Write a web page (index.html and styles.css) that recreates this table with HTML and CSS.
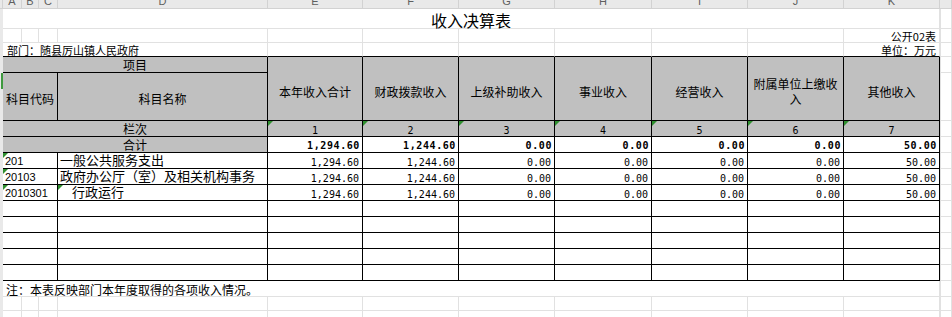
FILE: index.html
```html
<!DOCTYPE html>
<html lang="zh-CN">
<head>
<meta charset="utf-8">
<title>收入决算表</title>
<link rel="stylesheet" href="styles.css">
</head>
<body>
<div class="sheet">
  <!-- column letters -->
  <div class="corner"></div>
  <div class="ch">A</div><div class="ch">B</div><div class="ch">C</div><div class="ch">D</div>
  <div class="ch">E</div><div class="ch">F</div><div class="ch">G</div><div class="ch">H</div>
  <div class="ch">I</div><div class="ch">J</div><div class="ch">K</div><div class="ch chl"></div>

  <div class="sliver"><div class="sel"></div></div>

  <!-- row 1: title -->
  <div class="c s11 title">收入决算表</div><div class="c l"></div>

  <!-- row 2 -->
  <div class="c"></div><div class="c"></div><div class="c"></div><div class="c"></div>
  <div class="c"></div><div class="c"></div><div class="c"></div><div class="c"></div>
  <div class="c"></div><div class="c"></div><div class="c rt">公开02表</div><div class="c l"></div>

  <!-- row 3 -->
  <div class="c s4 top dept">部门：随县厉山镇人民政府</div>
  <div class="c top"></div><div class="c top"></div><div class="c top"></div>
  <div class="c top"></div><div class="c top"></div><div class="c top"></div>
  <div class="c top rt">单位：万元</div><div class="c l"></div>

  <!-- header rows -->
  <div class="t g s4 lab">项目</div>
  <div class="t g r2 hd">本年收入合计</div>
  <div class="t g r2 hd">财政拨款收入</div>
  <div class="t g r2 hd">上级补助收入</div>
  <div class="t g r2 hd">事业收入</div>
  <div class="t g r2 hd">经营收入</div>
  <div class="t g r2 hd">附属单位上缴收入</div>
  <div class="t g r2 hd">其他收入</div>
  <div class="c l"></div>

  <div class="t g s3 hd2">科目代码</div>
  <div class="t g hd2">科目名称</div>
  <div class="c l"></div>

  <!-- 栏次 -->
  <div class="t g s4 lab">栏次</div>
  <div class="t g idx tri">1</div><div class="t g idx tri">2</div><div class="t g idx tri">3</div>
  <div class="t g idx tri">4</div><div class="t g idx tri">5</div><div class="t g idx tri">6</div>
  <div class="t g idx tri">7</div>
  <div class="c l"></div>

  <!-- 合计 -->
  <div class="t g s4 lab">合计</div>
  <div class="t num b">1,294.60</div><div class="t num b">1,244.60</div><div class="t num b">0.00</div>
  <div class="t num b">0.00</div><div class="t num b">0.00</div><div class="t num b">0.00</div>
  <div class="t num b">50.00</div>
  <div class="c l"></div>

  <!-- data rows -->
  <div class="t s3 code tri">201</div><div class="t name">一般公共服务支出</div>
  <div class="t num">1,294.60</div><div class="t num">1,244.60</div><div class="t num">0.00</div>
  <div class="t num">0.00</div><div class="t num">0.00</div><div class="t num">0.00</div>
  <div class="t num">50.00</div>
  <div class="c l"></div>

  <div class="t s3 code tri">20103</div><div class="t name">政府办公厅（室）及相关机构事务</div>
  <div class="t num">1,294.60</div><div class="t num">1,244.60</div><div class="t num">0.00</div>
  <div class="t num">0.00</div><div class="t num">0.00</div><div class="t num">0.00</div>
  <div class="t num">50.00</div>
  <div class="c l"></div>

  <div class="t s3 code tri">2010301</div><div class="t name ind tri">行政运行</div>
  <div class="t num">1,294.60</div><div class="t num">1,244.60</div><div class="t num">0.00</div>
  <div class="t num">0.00</div><div class="t num">0.00</div><div class="t num">0.00</div>
  <div class="t num">50.00</div>
  <div class="c l"></div>

  <!-- empty rows -->
  <div class="t s3"></div><div class="t"></div>
  <div class="t"></div><div class="t"></div><div class="t"></div><div class="t"></div>
  <div class="t"></div><div class="t"></div><div class="t"></div>
  <div class="c l"></div>

  <div class="t s3"></div><div class="t"></div>
  <div class="t"></div><div class="t"></div><div class="t"></div><div class="t"></div>
  <div class="t"></div><div class="t"></div><div class="t"></div>
  <div class="c l"></div>

  <div class="t s3"></div><div class="t"></div>
  <div class="t"></div><div class="t"></div><div class="t"></div><div class="t"></div>
  <div class="t"></div><div class="t"></div><div class="t"></div>
  <div class="c l"></div>

  <div class="t s3"></div><div class="t"></div>
  <div class="t"></div><div class="t"></div><div class="t"></div><div class="t"></div>
  <div class="t"></div><div class="t"></div><div class="t"></div>
  <div class="c l"></div>

  <div class="t s3"></div><div class="t"></div>
  <div class="t"></div><div class="t"></div><div class="t"></div><div class="t"></div>
  <div class="t"></div><div class="t"></div><div class="t"></div>
  <div class="c l"></div>

  <!-- note -->
  <div class="c s11 note">注：本表反映部门本年度取得的各项收入情况。</div><div class="c l"></div>

  <!-- trailing rows -->
  <div class="c"></div><div class="c"></div><div class="c"></div><div class="c"></div>
  <div class="c"></div><div class="c"></div><div class="c"></div><div class="c"></div>
  <div class="c"></div><div class="c"></div><div class="c"></div><div class="c l"></div>

  <div class="c"></div><div class="c"></div><div class="c"></div><div class="c"></div>
  <div class="c"></div><div class="c"></div><div class="c"></div><div class="c"></div>
  <div class="c"></div><div class="c"></div><div class="c"></div><div class="c l"></div>
</div>
</body>
</html>
```

FILE: styles.css
```css
* {
  box-sizing: border-box;
  margin: 0;
  padding: 0;
}

html, body {
  margin: 0;
  width: 952px;
  height: 317px;
  overflow: hidden;
  background: #ffffff;
}

body {
  font-family: "Noto Sans CJK SC", "Noto Sans", sans-serif;
  font-size: 12px;
  color: #000;
}

.sheet {
  display: grid;
  grid-template-columns: 3px 19px 17px 19px 210px 95px 96px 96px 97px 96px 96px 96px 1fr;
  grid-template-rows: 9px 20px 14px 14px 16px 48px 16px 16px repeat(8, 16px) 16px 14px 14px;
}

/* column-letter header */
.corner,
.ch {
  background: #e9e9e9;
  border-right: 1px solid #d2d2d2;
  border-bottom: 1px solid #d2d2d2;
}

.ch {
  font-family: "Liberation Sans", sans-serif;
  font-size: 11px;
  line-height: 11px;
  color: #5f5f5f;
  display: flex;
  justify-content: center;
  align-items: flex-end;
  padding-bottom: 1px;
  overflow: hidden;
}

.sliver {
  grid-column: 1;
  grid-row: 2 / -1;
  background: #e9e9e9;
}

.sel {
  margin-top: 64px;
  margin-left: 1px;
  width: 2px;
  height: 16px;
  background: #3f9a3f;
}

/* plain cells with gridlines */
.c {
  border-right: 1px solid #e1e1e1;
  border-bottom: 1px solid #e1e1e1;
  display: flex;
  align-items: center;
  white-space: nowrap;
  min-width: 0;
}

.l {
  border-left: 1px solid #e1e1e1;
}

.s3 { grid-column: span 3; }
.s4 { grid-column: span 4; }
.s11 { grid-column: span 11; }
.r2 { grid-row: span 2; }

.top {
  border-bottom-color: #000;
}

/* table cells */
.t {
  position: relative;
  border-right: 1px solid #000;
  border-bottom: 1px solid #000;
  display: flex;
  align-items: center;
  white-space: nowrap;
  min-width: 0;
}

.g {
  background: #c0c0c0;
  justify-content: center;
  text-align: center;
}

.tri::before {
  content: "";
  position: absolute;
  left: 0;
  top: 0;
  border-top: 5px solid #2f8f2f;
  border-right: 5px solid transparent;
}

.title {
  font-size: 16px;
  line-height: 16px;
  justify-content: center;
  align-items: flex-end;
}

.rt {
  justify-content: flex-end;
  align-items: flex-end;
  font-size: 11px;
  line-height: 11px;
  padding-right: 3px;
}

.dept {
  font-size: 11px;
  line-height: 11px;
  align-items: flex-end;
  padding-left: 4px;
}

.lab {
  align-items: flex-end;
  line-height: 12px;
  padding-bottom: 1px;
}

.hd {
  white-space: normal;
  line-height: 15px;
  padding: 5px 5px 0;
}

.hd2 {
  padding-top: 4px;
}

.idx {
  font-family: "DejaVu Sans Mono", monospace;
  font-size: 10px;
  line-height: 10px;
  align-items: flex-end;
}

.num {
  font-family: "DejaVu Sans Mono", monospace;
  font-size: 10px;
  line-height: 10px;
  justify-content: flex-end;
  align-items: flex-end;
  padding-right: 3px;
}

.b {
  font-weight: bold;
  letter-spacing: 0.6px;
  padding-right: 2px;
  padding-bottom: 1px;
}

.code {
  font-family: "Liberation Sans", sans-serif;
  font-size: 11px;
  line-height: 11px;
  align-items: flex-end;
  padding-left: 2px;
  padding-bottom: 1px;
}

.name {
  font-size: 13px;
  line-height: 14px;
  align-items: flex-end;
  padding-left: 2px;
  padding-bottom: 1px;
}

.ind {
  padding-left: 14px;
}

.note {
  font-size: 12px;
  line-height: 12px;
  align-items: flex-end;
  padding-left: 3px;
}
```
